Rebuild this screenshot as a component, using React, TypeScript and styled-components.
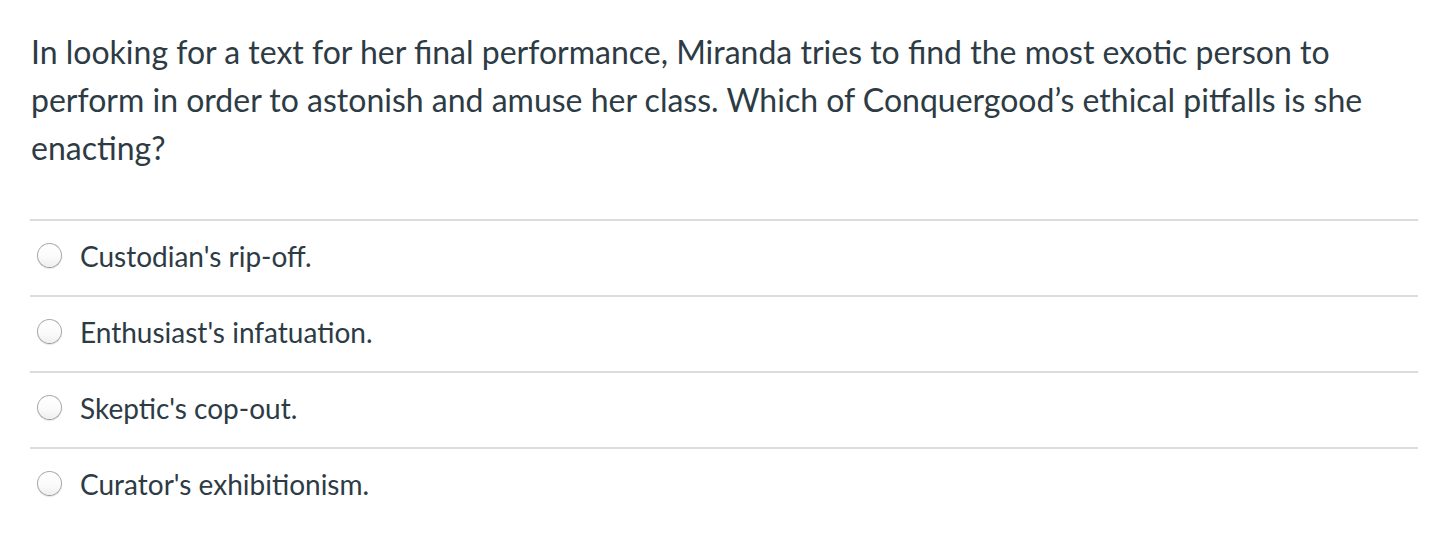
import styled, { createGlobalStyle } from "styled-components";

const GlobalStyle = createGlobalStyle`
  body {
    margin: 0;
    background: #ffffff;
    font-family: Lato, "Noto Sans", sans-serif;
    color: #2d3b45;
  }
`;

const Wrap = styled.div`
  padding: 28px 20px 0 30px;
`;

const Question = styled.p`
  margin: 0 0 47px;
  padding-left: 1px;
  font-size: 32px;
  line-height: 48px;
  font-weight: 400;
`;

const Answers = styled.div`
  display: flex;
  flex-direction: column;
`;

const Answer = styled.label`
  display: flex;
  align-items: center;
  gap: 18px;
  height: 76px;
  box-sizing: border-box;
  padding: 0 0 5px 7px;
  border-top: 2px solid #dcdcdc;
  font-size: 28px;
  cursor: pointer;
`;

const Radio = styled.span`
  width: 25px;
  height: 25px;
  box-sizing: border-box;
  border-radius: 50%;
  border: 1.5px solid #aaaaaa;
  border-bottom-color: #9a9a9a;
  background: linear-gradient(180deg, #ffffff 0%, #fafafa 60%, #eeeeee 100%);
  box-shadow: 0 1px 1px rgba(0, 0, 0, 0.1);
  flex-shrink: 0;
`;

const answers = [
  "Custodian's rip-off.",
  "Enthusiast's infatuation.",
  "Skeptic's cop-out.",
  "Curator's exhibitionism.",
];

function App() {
  return (
    <>
      <GlobalStyle />
      <Wrap>
        <Question>
          In looking for a text for her final performance, Miranda tries to find the most exotic person to
          perform in order to astonish and amuse her class. Which of Conquergood’s ethical pitfalls is she
          enacting?
        </Question>
        <Answers>
          {answers.map((a) => (
            <Answer key={a}>
              <Radio />
              {a}
            </Answer>
          ))}
        </Answers>
      </Wrap>
    </>
  );
}

export default App;
